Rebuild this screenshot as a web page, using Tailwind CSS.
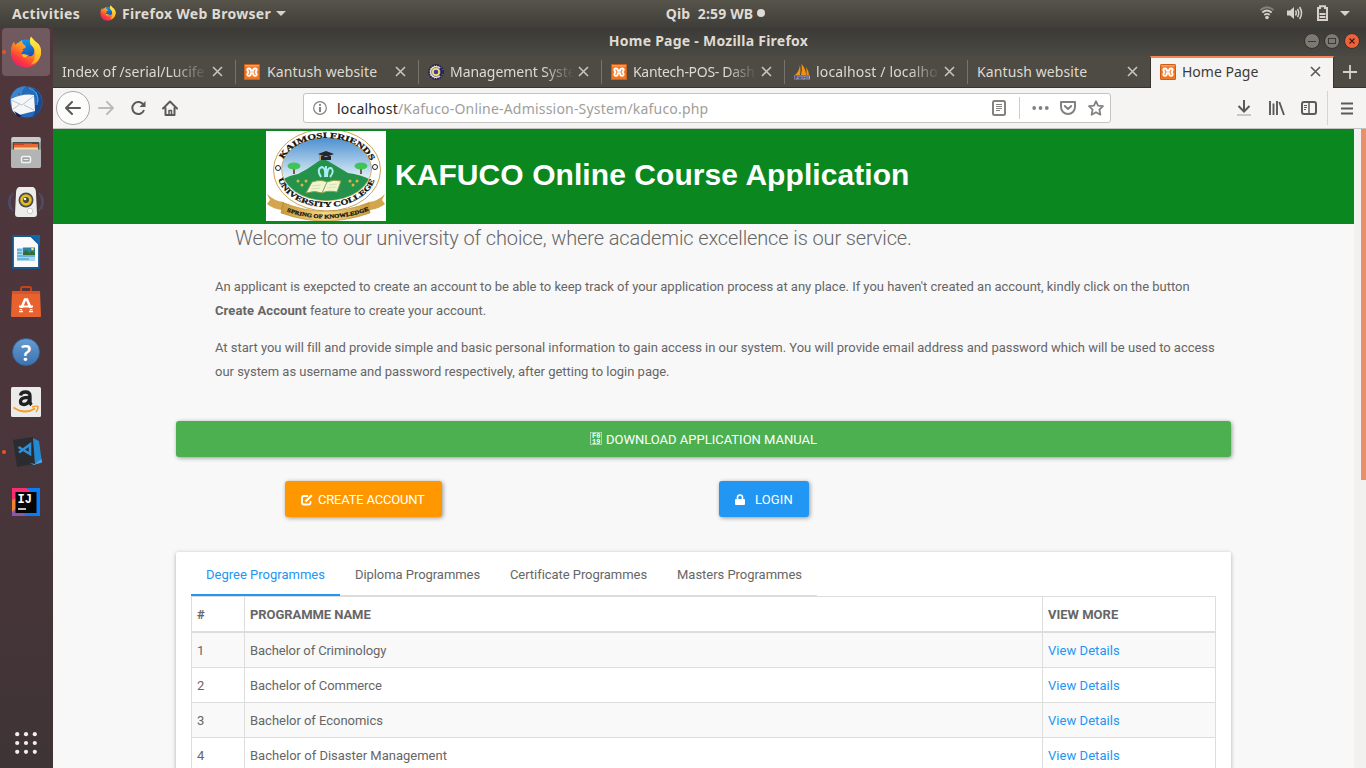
<!DOCTYPE html>
<html lang="en">
<head>
<meta charset="utf-8">
<title>Home Page - Mozilla Firefox</title>
<script src="https://cdn.jsdelivr.net/npm/@tailwindcss/browser@4"></script>
</head>
<body class="w-[1366px] h-[768px] overflow-hidden flex flex-col bg-[#f8f8f8] font-['Noto_Sans',sans-serif]">
<svg width="0" height="0" class="absolute">
  <defs>
    <linearGradient id="fxr" x1="0.8" y1="0" x2="0.2" y2="1"><stop offset="0" stop-color="#ffd43a"/><stop offset=".45" stop-color="#ff9020"/><stop offset=".75" stop-color="#ff3a3c"/><stop offset="1" stop-color="#e5197c"/></linearGradient>
    <linearGradient id="fxy" x1="0" y1="0" x2="0" y2="1"><stop offset="0" stop-color="#fff34a"/><stop offset="1" stop-color="#ffa81c"/></linearGradient>
    <linearGradient id="fxb" x1="0" y1="0" x2="0.3" y2="1"><stop offset="0" stop-color="#13a5f5"/><stop offset="1" stop-color="#1a3fa8"/></linearGradient>
    <symbol id="firefox" viewBox="0 0 32 32">
      <circle cx="16" cy="15.500" r="12" fill="url(#fxb)"/>
      <path d="M4 5.500 L5 9 Q7 6.500 9 6.500 Q11 4.500 12 4 Q11.500 7 14.500 9 L16 10.500 Q15.500 12.500 12.500 13 L13.500 14.500 Q10.500 16 12 19.500 Q15 22 19 20 Q22.500 21 24 17 Q25.500 11 21 7 L21 1 Q23 2 25 5.500 Q32 9 31 18 Q28 31 15 31.500 Q3 30.500 1 19 Q0 11 4 5.500Z" fill="url(#fxr)"/>
      <path d="M21 0.500 Q22 3 25.500 5.500 Q32 10 31 18 Q29 27 21 28.500 Q26 23 25 16 Q24 11 20.500 8.500 Q19 4 21 .5Z" fill="url(#fxy)"/>
      <path d="M11.500 18.500 Q14 17.500 17 19 L19 18.500 Q17 22 13.500 21.500Z" fill="#ffb52a"/>
    </symbol>
    <symbol id="xampp" viewBox="0 0 16 16">
      <rect width="16" height="16" rx="1.500" fill="#f37623"/><rect x=".5" y=".5" width="15" height="15" rx="1" fill="none" stroke="#c9601c"/><rect x="1" y="1" width="14" height="1.500" fill="#fa9c58"/>
      <path d="M5 4.500C3.400 4.500 3 5.500 3.500 6.500L4.500 8L3.500 9.700C3 11 3.700 11.900 5 11.900C6.300 11.900 6.800 10.800 6.800 9.300H9.200C9.200 10.800 9.700 11.900 11 11.900C12.300 11.900 13 11 12.500 9.700L11.500 8L12.500 6.500C13 5.500 12.600 4.500 11 4.500C9.500 4.500 9.200 5.700 9.200 6.700H6.800C6.800 5.700 6.500 4.500 5 4.500Z" fill="none" stroke="#fff" stroke-width="1.900" stroke-linejoin="round"/>
    </symbol>
    <symbol id="close" viewBox="0 0 11 11"><path d="M1 1L10 10M10 1L1 10" stroke="currentColor" stroke-width="1.600" fill="none"/></symbol>
  </defs>
</svg>

<!-- desktop panel -->
<header class="h-7 shrink-0 grid grid-cols-[1fr_auto_1fr] items-center bg-linear-to-b from-[#57544b] to-[#3f3d38] text-[#dfdbd2] text-[14px] font-bold pl-3 pr-4 pb-[2px]">
  <div class="flex items-center">
    <span class="w-[68px] tracking-[0.3px] whitespace-nowrap">Activities</span>
    <svg class="w-4 h-4 ml-5"><use href="#firefox"/></svg>
    <span class="ml-[6px] w-[150px] tracking-[0.3px] whitespace-nowrap">Firefox Web Browser</span>
    <svg class="ml-1 w-[10px] h-[5px]" viewBox="0 0 10 5"><path d="M0 0h10L5 5z" fill="#d6d2ca"/></svg>
  </div>
  <div class="flex items-center pl-[69px]"><span class="tracking-[0.15px] whitespace-pre">Qib  2:59 WB</span><span class="ml-1 size-2 rounded-full bg-[#dfdbd2]"></span></div>
  <div class="flex items-center justify-end">
    <svg width="14" height="14" viewBox="0 0 14 14" fill="none" stroke="#d6d2ca" stroke-width="1.700"><path d="M.5 4Q7-1.500 13.500 4" stroke="#85827a"/><path d="M2.300 6.500Q7 2.500 11.700 6.500M4.300 9Q7 6.700 9.700 9"/><circle cx="7" cy="11.500" r="1.800" fill="#d6d2ca" stroke="none"/></svg>
    <svg class="ml-[13px]" width="16" height="14" viewBox="0 0 16 14" fill="none" stroke="#d6d2ca" stroke-width="1.500"><path d="M0 4.500h3L7 1v12L3 9.500H0z" fill="#d6d2ca" stroke="none"/><path d="M8.500 4.500Q10 7 8.500 9.500M10.500 2.800Q13 7 10.500 11.200M12.600 1Q16.500 7 12.600 13"/></svg>
    <svg class="ml-[13px]" width="13" height="16" viewBox="0 0 13 16" fill="none" stroke="#d6d2ca" stroke-width="2"><path d="M2 3H4V1.200H9V3H11V15H2zM3.500 9H9.500M3.500 12H9.500" /></svg>
    <svg class="ml-[11px]" width="10" height="5" viewBox="0 0 10 5"><path d="M0 0h10L5 5z" fill="#d6d2ca"/></svg>
  </div>
</header>

<div class="flex flex-1 min-h-0">
  <!-- dock -->
  <nav class="w-[53px] shrink-0 bg-linear-to-b from-[#50363a] via-[#4b363c] to-[#3f3435] flex flex-col items-center justify-between pr-px">
    <div class="flex flex-col gap-[2px] w-full">
      <div class="h-12 ml-[2px] w-12 rounded bg-[#705a5f] flex items-center justify-center relative"><span class="absolute left-0 size-1 rounded-full bg-[#e95420]"></span><svg class="size-8"><use href="#firefox"/></svg></div>
      <div class="h-12 flex items-center justify-center"><svg width="34" height="34" viewBox="0 0 34 34"><circle cx="18" cy="17" r="15.500" fill="#256bb8"/><path d="M2 11Q6 1 17 1Q12 6 13 10L7 13L7 30Q-1 20 2 11Z" fill="#3786d3"/><path d="M25 3Q36 12 32 23Q29 30 22 34Q27 27 26 22Q31 15 25 3Z" fill="#174a92"/><path d="M27 7Q30 13 28 20M20 3Q30 7 29 17" stroke="#4f9be0" fill="none"/><path d="M2 14Q14 8 25 10L26 26L10 30Q4 28 3 24Z" fill="#f5f6f8"/><path d="M2 15L13 20L25 11M3 25L11 19M25 25L15 20" stroke="#bac3d0" fill="none"/><path d="M5 26L13 31L9 32Z" fill="#1a1b58"/><circle cx="10" cy="9" r="1" fill="#8e4b2d"/></svg></div>
      <div class="h-12 flex items-center justify-center"><svg width="32" height="32" viewBox="0 0 32 32"><rect x="1" y="1" width="30" height="31" rx="2" fill="#8f9090"/><rect x="1.500" y="1" width="29" height="6" rx="2" fill="#c9caca"/><rect x="3" y="6" width="26" height="9" fill="#4b4b4b"/><rect x="4" y="7" width="18" height="3" fill="#d2411f"/><path d="M4 9H13L15 8H28V14H4Z" fill="#e46a35"/><path d="M4 11.500H28V14H4z" fill="#f6d7a8"/><path d="M1 13.500H31V30Q31 32 29 32H3Q1 32 1 30Z" fill="#b3b4b4"/><rect x="11.500" y="20.500" width="9" height="6" rx="1.500" fill="#a1a2a2" stroke="#f3f3f3" stroke-width="1.500"/><path d="M13.500 23.500h5" stroke="#eee"/></svg></div>
      <div class="h-12 flex items-center justify-center"><svg width="36" height="32" viewBox="0 0 36 32"><path d="M5 7Q-1 16 5 25M31 7Q37 16 31 25M2.500 9Q-1 16 2.500 23M33.500 9Q37 16 33.500 23" stroke="#4f4a68" fill="none" stroke-width="1.500"/><path d="M11 1H25Q28 2 28 7L29 28Q29 31 26 31H10Q7 31 7 28L8 7Q8 2 11 1Z" fill="#ececea"/><circle cx="18" cy="14" r="7.500" fill="#4b4c4e"/><circle cx="18" cy="14" r="5.800" fill="#e3bd1e"/><circle cx="18" cy="14" r="3" fill="#464646"/><circle cx="17" cy="13" r="1.300" fill="#eee"/><circle cx="22" cy="25" r="2.700" fill="#fff" stroke="#ccc"/></svg></div>
      <div class="h-12 flex items-center justify-center"><svg width="28" height="34" viewBox="0 0 28 34"><path d="M1 1H19L27 9V33H1Z" fill="#fafafa" stroke="#15588e" stroke-width="1.800"/><path d="M18.500 0H28V10Z" fill="#0d6baf"/><rect x="5" y="13" width="18" height="13" fill="#a9d5ee"/><rect x="11" y="12.500" width="12" height="7.500" fill="#2c81a4"/><path d="M11 20V18L14 15L17 18L20 16L23 18V20Z" fill="#356d2d"/><circle cx="20.500" cy="14" r="1.300" fill="#ffe34f"/><path d="M5 15H10M5 18H10M5 21H23M5 24H17" stroke="#2b91c9"/></svg></div>
      <div class="h-12 flex items-center justify-center"><svg width="32" height="32" viewBox="0 0 32 32"><path d="M11 8V2.500Q11 1 12.500 1H19.500Q21 1 21 2.500V8" fill="none" stroke="#c9401b" stroke-width="2"/><path d="M2 5H30L31 30Q31 31 30 31H2Q1 31 1 30Z" fill="#e8622f"/><path d="M2 5H30V8H2Z" fill="#d8552a"/><path d="M10.500 24L15 13.500H17L21.500 24" fill="none" stroke="#fff" stroke-width="2.600"/><path d="M9 20.500H23" stroke="#fff" stroke-width="2"/><path d="M9 22.500H23" stroke="#e8622f"/><path d="M9 25.500H13M19 25.500H23" stroke="#fff" stroke-width="1.500"/></svg></div>
      <div class="h-12 flex items-center justify-center"><div class="size-7 rounded-full bg-linear-to-b from-[#669bd2] to-[#3d73b0] border border-[#3667a0] flex items-center justify-center text-white text-[22px] font-semibold leading-none">?</div></div>
      <div class="h-12 flex items-center justify-center"><svg width="30" height="30" viewBox="0 0 30 30"><rect width="30" height="30" rx="1.500" fill="#ebebeb"/><path d="M9.500 8.500Q10 5 14.500 5Q19 5 19 9V15Q19 16.500 20.500 18M19 10.500Q9.500 10 9.500 14.500Q9.500 17.500 13 17.500Q18 17 18.500 12" fill="none" stroke="#202020" stroke-width="3.300"/><path d="M2.500 20.500Q14 28 24 21.500" fill="none" stroke="#f79b22" stroke-width="2"/><path d="M21 20Q26 18.500 27 19.500Q27.500 22 25 25" fill="none" stroke="#f79b22" stroke-width="1.500"/></svg></div>
      <div class="h-12 flex items-center justify-center relative"><span class="absolute left-[2px] size-1 rounded-full bg-[#e95420]"></span><svg class="ml-[2px]" width="30" height="30" viewBox="0 0 30 30"><path d="M1 3L21 0L23 27L5 30Z" fill="#2b2c30"/><path d="M21 1L27 4L30 26L23 27Z" fill="#2489d1"/><path d="M23 27L29.500 22L30 25L22 28L18 26Z" fill="#51a9e6"/><path d="M6.500 10L18 17V7.500L7 15.500" fill="none" stroke="#2f8ed4" stroke-width="2.600"/></svg></div>
      <div class="h-12 flex items-center justify-center"><svg width="28" height="28" viewBox="0 0 28 28"><rect width="28" height="28" fill="#087cfa"/><path d="M0 0H14L20 4L5 24H0Z" fill="#f82f6c"/><path d="M0 12L5 10V23L0 25Z" fill="#ef8331"/><path d="M0 28V24L7 18L14 28Z" fill="#8d56ae"/><rect x="3.500" y="4" width="21" height="21" fill="#050505"/><text x="5.500" y="14.500" font-family="Liberation Mono" font-weight="bold" font-size="12" fill="#fff">IJ</text><path d="M6 21H14" stroke="#fff" stroke-width="1.500"/></svg></div>
    </div>
    <svg class="mb-[14px]" width="22" height="22" viewBox="0 0 22 22" fill="#f2f0ee"><g id="dotrow"><circle cx="2.200" cy="2.200" r="2.100"/><circle cx="11" cy="2.200" r="2.100"/><circle cx="19.800" cy="2.200" r="2.100"/></g><use href="#dotrow" y="8.800"/><use href="#dotrow" y="17.600"/></svg>
  </nav>

  <!-- browser window -->
  <section class="flex-1 min-w-0 flex flex-col">
    <div class="h-7 shrink-0 bg-linear-to-b from-[#3b3a36] to-[#4b4943] grid grid-cols-[1fr_auto_1fr] items-center text-[14px] font-bold text-[#dfdbd2] pr-[6px]">
      <span></span><span class="tracking-[0.25px] pb-[4px] pl-[4px]">Home Page - Mozilla Firefox</span>
      <div class="flex justify-end gap-1 pb-[2px]">
        <svg width="16" height="16" viewBox="0 0 16 16"><circle cx="8" cy="8" r="7.500" fill="#7b7971" stroke="#33312d"/><path d="M4 8.500h8" stroke="#3b3934"/></svg>
        <svg width="16" height="16" viewBox="0 0 16 16"><circle cx="8" cy="8" r="7.500" fill="#7b7971" stroke="#33312d"/><rect x="4.500" y="5.500" width="7" height="5" fill="none" stroke="#3b3934"/></svg>
        <svg width="16" height="16" viewBox="0 0 16 16"><circle cx="8" cy="8" r="7.500" fill="#ee6239" stroke="#33312d"/><path d="M5.500 5.500l5 5m0-5l-5 5" stroke="#3b1d12" stroke-width="1.200"/></svg>
      </div>
    </div>
    <div class="h-8 shrink-0 bg-[#4e4b44] border-b border-[#35342f] flex text-[14px] text-[#dedad2] whitespace-nowrap">
      <div class="w-[182px] flex items-center pl-[9px] pr-3"><span class="w-[146px] mask-r-from-75% mask-r-to-100%">Index of /serial/Lucife</span><svg class="ml-auto size-[11px] text-[#c8c4bb]"><use href="#close"/></svg></div>
      <div class="w-[183px] flex items-center pl-[9px] pr-3 relative"><i class="absolute left-0 top-1 h-6 w-px bg-[#77746c]"></i><svg class="size-4 mr-[7px]"><use href="#xampp"/></svg><span class="w-[120px] tracking-[0.1px]">Kantush website</span><svg class="ml-auto size-[11px] text-[#c8c4bb]"><use href="#close"/></svg></div>
      <div class="w-[183px] flex items-center pl-[10px] pr-3 relative"><i class="absolute left-0 top-1 h-6 w-px bg-[#77746c]"></i><svg class="size-4 mr-[6px]" viewBox="0 0 16 16"><circle cx="8" cy="8" r="7" fill="#e9e5c8" stroke="#242055" stroke-width="1.800" stroke-dasharray="2 .6"/><circle cx="8" cy="8" r="4.500" fill="#f1e06a" stroke="#8e86b8"/><circle cx="8" cy="8" r="2.300" fill="#4638a0"/><path d="M12 4Q15 8 12 12" stroke="#242055" stroke-width="2" fill="none"/></svg><span class="w-[124px] tracking-[-0.05px] mask-r-from-75% mask-r-to-100%">Management Syste</span><svg class="ml-auto size-[11px] text-[#c8c4bb]"><use href="#close"/></svg></div>
      <div class="w-[183px] flex items-center pl-[10px] pr-3 relative"><i class="absolute left-0 top-1 h-6 w-px bg-[#77746c]"></i><svg class="size-4 mr-[6px]"><use href="#xampp"/></svg><span class="w-[124px] tracking-[-0.3px] mask-r-from-75% mask-r-to-100%">Kantech-POS- Dash</span><svg class="ml-auto size-[11px] text-[#c8c4bb]"><use href="#close"/></svg></div>
      <div class="w-[183px] flex items-center pl-[10px] pr-3 relative"><i class="absolute left-0 top-1 h-6 w-px bg-[#77746c]"></i><svg class="size-4 mr-[6px]" viewBox="0 0 16 16"><path d="M6 1Q7 6 6 11H1Q5 8 6 1ZM7.500 0Q12 5 12 11H7Q8.500 6 7.500 0ZM12 3Q15 7 15 11H12.500Q13 7 12 3Z" fill="#f29111"/><path d="M0 11.500H16V15.500H0Z" fill="#9fa1bd"/><path d="M1 15.500V12.500H3V14H1M5 12V15.500M7 12V15.500M5 14H7M9 15V12.500L10.500 14L12 12.500V15.500M14 12V15.500" stroke="#333765" fill="none" stroke-width=".8"/></svg><span class="w-[124px] tracking-[0.15px] mask-r-from-75% mask-r-to-100%">localhost / localho</span><svg class="ml-auto size-[11px] text-[#c8c4bb]"><use href="#close"/></svg></div>
      <div class="w-[183px] flex items-center pl-[10px] pr-3 relative"><i class="absolute left-0 top-1 h-6 w-px bg-[#77746c]"></i><span class="tracking-[0.1px]">Kantush website</span><svg class="ml-auto size-[11px] text-[#c8c4bb]"><use href="#close"/></svg></div>
      <div class="w-[184px] h-8 flex items-center pl-[9px] pr-[12px] pb-[3px] bg-[#f5f4f3] text-[#3d3b38] border-x border-[#35342f] border-t-2 border-t-[#f58556]"><svg class="size-4 mr-[6px]"><use href="#xampp"/></svg><span>Home Page</span><svg class="ml-auto size-[11px] text-[#5b5955]"><use href="#close"/></svg></div>
      <div class="flex-1 flex items-center justify-center"><svg width="14" height="14" viewBox="0 0 14 14"><path d="M7 0V14M0 7H14" stroke="#d6d2ca" stroke-width="1.800"/></svg></div>
    </div>
    <div class="h-[41px] shrink-0 bg-[#f5f4f3] border-b border-[#c5c3c1] flex items-center px-[3px] text-[#5c5a57]">
      <div class="size-[34px] rounded-full border border-[#aaa8a5] bg-[#fcfcfc] flex items-center justify-center"><svg width="16" height="14" viewBox="0 0 16 14" fill="none" stroke="currentColor" stroke-width="2" stroke-linecap="round" stroke-linejoin="round"><path d="M15 7H1M7 1L1 7L7 13"/></svg></div>
      <svg class="ml-2" width="16" height="14" viewBox="0 0 16 14" fill="none" stroke="#bdbbb8" stroke-width="2" stroke-linecap="round" stroke-linejoin="round"><path d="M1 7H15M9 1L15 7L9 13"/></svg>
      <svg class="ml-4" width="16" height="16" viewBox="0 0 16 16" fill="none" stroke="currentColor" stroke-width="2"><path d="M13.500 5A6 6 0 1 0 14 10"/><path d="M15.500 1V7H9.500Z" fill="currentColor" stroke="none"/></svg>
      <svg class="ml-4" width="16" height="16" viewBox="0 0 16 16" fill="none" stroke="currentColor" stroke-width="2" stroke-linejoin="round" stroke-linecap="round"><path d="M1 8.500L8 1.500L15 8.500M3.500 8V15H12.500V8"/><path d="M7 14V10.500H9.500V14" stroke-width="1.500"/></svg>
      <div class="ml-[125px] w-[808px] h-[30px] rounded-[3px] border border-[#c6c4c2] bg-white flex items-center pl-[9px] pr-[6px] text-[14px]">
        <svg width="14" height="14" viewBox="0 0 14 14"><circle cx="7" cy="7" r="6.300" fill="none" stroke="#828282" stroke-width="1.200"/><path d="M7 3V4.800M7 6V11" stroke="#777" stroke-width="1.800"/></svg>
        <span class="ml-[10px] text-[#a09e9b] tracking-[0.2px]"><span class="text-[#2b2a28]">localhost</span>/Kafuco-Online-Admission-System/kafuco.php</span>
        <div class="ml-auto flex items-center text-[#848280]">
          <svg width="14" height="16" viewBox="0 0 14 16" fill="none" stroke="currentColor"><rect x="1" y="1" width="12" height="14" rx="1.500" stroke-width="2"/><path d="M4 4.500H10M4 6.500H10M4 8.500H10M4 10.500H8"/></svg>
          <i class="ml-[13px] w-px h-[22px] bg-[#cfcdcb]"></i>
          <svg class="ml-[12px]" width="17" height="4" viewBox="0 0 17 4" fill="currentColor"><circle cx="2.200" cy="2" r="1.900"/><circle cx="8.500" cy="2" r="1.900"/><circle cx="14.800" cy="2" r="1.900"/></svg>
          <svg class="ml-[11px]" width="16" height="14" viewBox="0 0 16 14" fill="none" stroke="currentColor" stroke-width="2" stroke-linecap="round" stroke-linejoin="round"><path d="M1 1H15V6A7 7 0 0 1 1 6ZM4.800 5L8 8L11.200 5"/></svg>
          <svg class="ml-3" width="16" height="16" viewBox="0 0 16 16" fill="none" stroke="currentColor" stroke-width="1.800" stroke-linejoin="round"><path d="M8 1.200L10 5.600L15 6.200L11.400 9.600L12.400 14.700L8 12.200L3.600 14.700L4.600 9.600L1 6.200L6 5.600Z"/></svg>
        </div>
      </div>
      <div class="ml-auto flex items-center pr-[10px]">
        <svg width="14" height="16" viewBox="0 0 14 16" fill="none" stroke="currentColor" stroke-width="2"><path d="M7 0V11M1.500 6L7 11.500L12.500 6"/><path d="M0 15H14" stroke="#cbc9c7"/></svg>
        <svg class="ml-[18px]" width="16" height="15" viewBox="0 0 16 15" fill="none" stroke="currentColor" stroke-width="1.900"><path d="M1 0V14M4.500 2.500V14M8 0V14M10.300 1L15 14"/></svg>
        <svg class="ml-4" width="16" height="14" viewBox="0 0 16 14" fill="none" stroke="currentColor"><rect x="1" y="1" width="14" height="12" rx="2" stroke-width="2"/><path d="M8 1V13" stroke-width="1.500"/><path d="M3 4.500H6M3 6.500H6M3 8.500H5"/></svg>
        <i class="ml-[10px] w-px h-[34px] bg-[#d6d4d2]"></i>
        <svg class="ml-[13px]" width="12" height="13" viewBox="0 0 12 13" stroke="currentColor" stroke-width="2"><path d="M0 1.500H12M0 6.500H12M0 11.500H12"/></svg>
      </div>
    </div>

    <div class="flex-1 min-h-0 flex overflow-hidden bg-[#f8f8f8]">
      <main class="w-[1301px] flex flex-col font-[Roboto,sans-serif] text-[13px] text-[#666]">
        <div class="h-[95px] shrink-0 bg-[#0a871e] flex pl-[213px] pt-[2px]">
          <svg width="120" height="90" viewBox="0 0 120 90">
            <defs><linearGradient id="sky" x1="0" y1="0" x2="0" y2="1"><stop offset="0" stop-color="#4b8fd0"/><stop offset=".6" stop-color="#d5e9f5"/></linearGradient>
            <linearGradient id="gold"><stop offset="0" stop-color="#c99a3a"/><stop offset=".5" stop-color="#f5d884"/><stop offset="1" stop-color="#c99a3a"/></linearGradient>
            <clipPath id="disc"><ellipse cx="60.500" cy="38" rx="44.500" ry="31.500"/></clipPath>
            <path id="arcTop" d="M15 38A45.500 31 0 0 1 106 38"/><path id="arcBot" d="M11.500 42A49 34 0 0 0 109.500 42"/><path id="arcRib" d="M18 79.500Q60 95.500 104 79"/></defs>
            <rect width="120" height="90" fill="#fff"/>
            <ellipse cx="61" cy="39" rx="53.500" ry="41" fill="#fff" stroke="#cda452"/>
            <ellipse cx="60.500" cy="38" rx="45" ry="31.500" fill="url(#sky)" stroke="#c9a24a" stroke-width=".8"/>
            <g clip-path="url(#disc)"><path d="M12 52Q20 45 32 43Q42 38 50 32Q56 26 62 30Q72 36 82 42Q98 44 110 52V80H12Z" fill="#24924b"/></g>
            <path d="M28 36V43M95 36V43" stroke="#8a5932" stroke-width="2"/><ellipse cx="28" cy="35" rx="6.500" ry="3.500" fill="#3fc455"/><ellipse cx="95" cy="35" rx="6.500" ry="3.500" fill="#3fc455"/>
            <path d="M52 23L60 20L68 23L60 26ZM55 25V29H65V25" fill="#25252a"/><path d="M54 24V29" stroke="#c88c3e" stroke-width="1.500"/>
            <path d="M55 46Q50 38 56 36Q60 37 59 46M60 46V35M61 46Q61 36 65 37Q69 40 64 46" stroke="#a9ecf2" stroke-width="2" fill="none"/>
            <path d="M46 51Q55 48 61 51Q68 48 75 50L71 61Q62 59 56 62Q49 59 40 62Z" fill="#eff5cf" stroke="#8c9e55"/><path d="M61 51L56 62" stroke="#8c9e55"/><path d="M46 55L55 54M45 58L54 57M63 54L71 53M61 57L70 56" stroke="#c6d19c" stroke-width=".6"/>
            <g fill="#d2bb3e"><circle cx="32" cy="50" r="1.500"/><circle cx="36" cy="54" r="1.500"/><circle cx="40" cy="50" r="1.500"/><circle cx="84" cy="50" r="1.500"/><circle cx="87" cy="54" r="1.500"/><circle cx="91" cy="50" r="1.500"/></g>
            <g fill="#fff" stroke="#222"><circle cx="12" cy="37" r="2.500"/><circle cx="109" cy="36" r="2.500"/></g>
            <path d="M1 63Q8 70 18 71L16 79Q7 78 1 73L4 69ZM119 63Q112 70 103 71L104 79Q113 78 119 73L116 69Z" fill="#d3a54c"/>
            <path d="M17 71.500Q59 89 103 71.500L104 82Q59 98 15 82Z" fill="url(#gold)" stroke="#a87a24" stroke-width=".5"/>
            <g font-family="Liberation Serif" font-weight="bold" fill="#111" stroke="#111" stroke-width=".25"><text font-size="8"><textPath href="#arcTop" startOffset="10" textLength="103" lengthAdjust="spacingAndGlyphs">KAIMOSI FRIENDS</textPath></text><text font-size="7.500"><textPath href="#arcBot" startOffset="6" textLength="118" lengthAdjust="spacingAndGlyphs">UNIVERSITY COLLEGE</textPath></text><text font-size="5.500"><textPath href="#arcRib" startOffset="3" textLength="84" lengthAdjust="spacingAndGlyphs">SPRING OF KNOWLEDGE</textPath></text></g>
          </svg>
          <h1 class="ml-[9px] mt-[26px] font-['Liberation_Sans',sans-serif] font-bold text-[30px] leading-[36px] text-white tracking-[0.07px] whitespace-nowrap">KAFUCO Online Course Application</h1>
        </div>
        <h2 class="pl-[182px] text-[20px] leading-7 font-light text-[#666] tracking-[-0.12px] whitespace-nowrap">Welcome to our university of choice, where academic excellence is our service.</h2>
        <div class="pl-[162px] mt-[23px] leading-6 tracking-[-0.02px] whitespace-nowrap">
          <p>An applicant is exepcted to create an account to be able to keep track of your application process at any place. If you haven't created an account, kindly click on the button<br><b class="tracking-[0.1px]">Create Account</b> feature to create your account.</p>
          <p class="mt-[13px]">At start you will fill and provide simple and basic personal information to gain access in our system. You will provide email address and password which will be used to access<br>our system as username and password respectively, after getting to login page.</p>
        </div>
        <div class="ml-[123px] mt-[37px] w-[1055px] h-9 shrink-0 rounded-[3px] bg-[#4caf50] shadow-[1px_1px_4px_rgba(0,0,0,0.4)] text-white flex items-center justify-center pt-[2px]">
          <svg class="mr-1 mb-1" width="12" height="13" viewBox="0 0 12 13"><rect x=".5" y=".5" width="11" height="12" fill="none" stroke="#fff" stroke-opacity=".5"/><text font-family="Liberation Mono" font-weight="bold" font-size="7" fill="#fff"><tspan x="2" y="6">F0</tspan><tspan x="2" y="11.500">19</tspan></text></svg>
          <span>DOWNLOAD APPLICATION MANUAL</span>
        </div>
        <div class="mt-6 flex shrink-0 text-white whitespace-nowrap">
          <div class="ml-[232px] w-[157px] h-9 rounded-[3px] bg-[#ff9800] shadow-[1px_1px_4px_rgba(0,0,0,0.4)] flex items-center pl-4 pt-[2px]"><svg class="mr-[5px]" width="12" height="12" viewBox="0 0 12 12" fill="none" stroke="#fff"><path d="M7 2H3Q1 2 1 4V8.500Q1 10.500 3 10.500H7.500Q9.500 10.500 9.500 8.500V7" stroke-width="1.800"/><path d="M4.500 7.500L10.800 1.200" stroke-width="2.200"/></svg><span class="tracking-[-0.2px]">CREATE ACCOUNT</span></div>
          <div class="ml-[277px] w-[90px] h-9 rounded-[3px] bg-[#2196f3] shadow-[1px_1px_4px_rgba(0,0,0,0.4)] flex items-center pl-4 pt-[2px]"><svg class="mr-[10px]" width="10" height="12" viewBox="0 0 10 12"><path d="M2.500 6V3.500Q2.500 1 5 1Q7.500 1 7.500 3.500V6" fill="none" stroke="#fff" stroke-width="1.600"/><rect y="5" width="10" height="6" rx="1" fill="#fff"/></svg><span class="tracking-[0.15px]">LOGIN</span></div>
        </div>
        <div class="ml-[123px] mt-[35px] w-[1055px] h-[260px] shrink-0 rounded-t-[2px] bg-white shadow-[0_1px_4px_rgba(0,0,0,0.3)] px-[15px]">
          <div class="flex h-11 w-[626px] whitespace-nowrap leading-[46px] shadow-[inset_0_-1px_0_#ddd]">
            <span class="w-[149px] text-center text-[#2196f3] shadow-[inset_0_-2px_0_#2196f3]">Degree Programmes</span>
            <span class="w-[155px] text-center tracking-[-0.05px]">Diploma Programmes</span>
            <span class="w-[167px] text-center tracking-[-0.05px]">Certificate Programmes</span>
            <span class="w-[155px] text-center tracking-[-0.03px]">Masters Programmes</span>
          </div>
          <table class="w-[1025px] table-fixed border-collapse text-left [&_td]:border [&_th]:border [&_td]:border-[#ddd] [&_th]:border-[#ddd] [&_td]:px-[5px] [&_th]:px-[5px]">
            <colgroup><col class="w-[53px]"><col class="w-[798px]"><col></colgroup>
            <thead><tr class="h-[35px] border-b-2 border-[#ddd]"><th class="pt-px">#</th><th class="pt-px tracking-[-0.07px]">PROGRAMME NAME</th><th class="pt-px">VIEW MORE</th></tr></thead>
            <tbody>
              <tr class="h-[36px] bg-[#f9f9f9]"><td class="pt-[2px]">1</td><td class="pt-[2px] tracking-[-0.1px]">Bachelor of Criminology</td><td class="pt-[2px] text-[#2196f3] tracking-[0.05px]">View Details</td></tr>
              <tr class="h-[35px]"><td class="pt-[2px]">2</td><td class="pt-[2px] tracking-[-0.05px]">Bachelor of Commerce</td><td class="pt-[2px] text-[#2196f3] tracking-[0.05px]">View Details</td></tr>
              <tr class="h-[35px] bg-[#f9f9f9]"><td class="pt-[2px]">3</td><td class="pt-[2px] tracking-[-0.03px]">Bachelor of Economics</td><td class="pt-[2px] text-[#2196f3] tracking-[0.05px]">View Details</td></tr>
              <tr class="h-[35px]"><td class="pt-[2px]">4</td><td class="pt-[2px]">Bachelor of Disaster Management</td><td class="pt-[2px] text-[#2196f3] tracking-[0.05px]">View Details</td></tr>
            </tbody>
          </table>
        </div>
      </main>
      <div class="flex-1 flex justify-end bg-[#f2f1ef]"><div class="w-[5px] h-[351px] bg-[#e98f6e]"></div></div>
    </div>
  </section>
</div>
</body>
</html>
